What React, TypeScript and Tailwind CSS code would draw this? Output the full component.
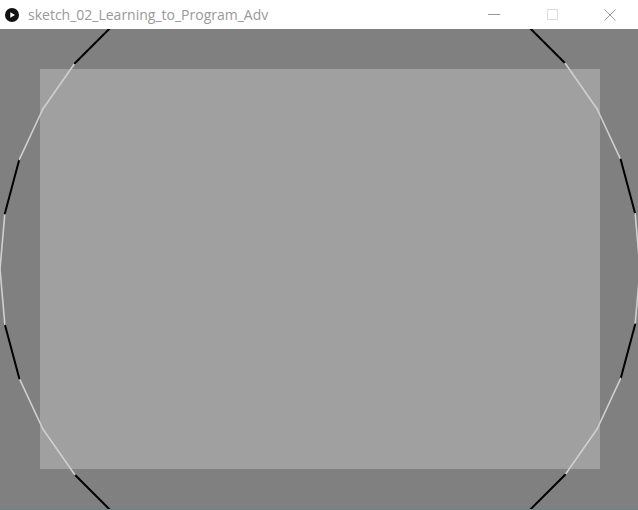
import React from "react";

// one colour per 10° band, counted from the horizontal axis
const bandColor = ["#cfcfcf", "#000000", "#cfcfcf", "#cfcfcf", "#000000", "#000000", "#000000", "#000000", "#000000"];

function SketchCanvas() {
  const cx = 320;
  const cy = 240;
  const r = 320;
  const segs = [];
  for (let i = 0; i < 36; i++) {
    const a0 = (i * 10 * Math.PI) / 180;
    const a1 = ((i + 1) * 10 * Math.PI) / 180;
    // angle of the segment's start from the nearest horizontal
    const deg = i * 10;
    const m = deg % 180;
    const fromH = m < 90 ? m : 170 - m;
    const color = bandColor[Math.floor(fromH / 10)];
    segs.push(
      <line
        key={i}
        x1={cx + r * Math.cos(a0)}
        y1={cy + r * Math.sin(a0)}
        x2={cx + r * Math.cos(a1)}
        y2={cy + r * Math.sin(a1)}
        stroke={color}
        strokeWidth={color === "#000000" ? 2 : 1.6}
        strokeLinecap="round"
      />
    );
  }
  return (
    <svg width="638" height="480" viewBox="0 0 638 480" className="block">
      <rect x="0" y="0" width="638" height="480" fill="#808080" />
      <rect x="40" y="40" width="560" height="400" fill="#a0a0a0" />
      {segs}
    </svg>
  );
}

export default function App() {
  return (
    <div className="w-[638px] h-[510px] overflow-hidden flex flex-col bg-white">
      <div className="h-[29px] flex items-center bg-white shrink-0">
        <svg width="14" height="14" viewBox="0 0 14 14" className="ml-[5px] shrink-0">
          <circle cx="7" cy="7" r="7" fill="#111" />
          <path d="M5.3 4.2 L10 7 L5.3 9.8 Z" fill="#fff" />
        </svg>
        <span
          className="ml-[9px] text-[14px] text-[#999999] leading-none whitespace-nowrap"
          style={{ fontFamily: '"Segoe UI", "Open Sans", "Noto Sans", sans-serif' }}
        >
          sketch_02_Learning_to_Program_Adv
        </span>
        <div className="ml-auto flex h-full">
          <div className="w-[58px] flex items-center justify-center">
            <div className="w-[12px] h-px bg-[#999999]" />
          </div>
          <div className="w-[58px] flex items-center justify-center">
            <div className="w-[11px] h-[11px] border border-[#dddddd]" />
          </div>
          <div className="w-[57px] flex items-center justify-center">
            <svg width="12" height="12" viewBox="0 0 12 12">
              <path d="M0.5 0.5 L11.5 11.5 M11.5 0.5 L0.5 11.5" stroke="#999999" strokeWidth="1" fill="none" />
            </svg>
          </div>
        </div>
      </div>
      <SketchCanvas />
      <div className="h-px bg-[#6d8287]" />
    </div>
  );
}
